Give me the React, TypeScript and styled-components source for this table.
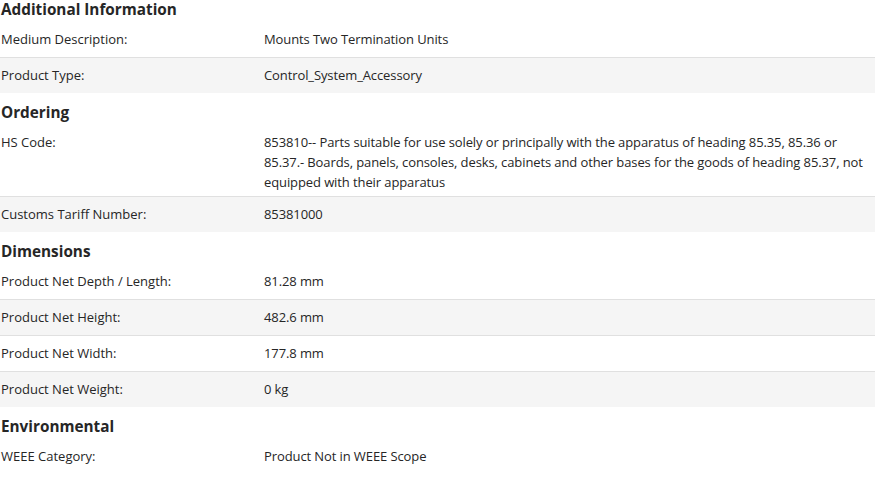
import React from "react";
import styled, { createGlobalStyle } from "styled-components";

type Row = {
  label: string;
  value: string;
};

type Section = {
  title: string;
  rows: Row[];
};

const sections: Section[] = [
  {
    title: "Additional Information",
    rows: [
      { label: "Medium Description:", value: "Mounts Two Termination Units" },
      { label: "Product Type:", value: "Control_System_Accessory" },
    ],
  },
  {
    title: "Ordering",
    rows: [
      {
        label: "HS Code:",
        value:
          "853810-- Parts suitable for use solely or principally with the apparatus of heading 85.35, 85.36 or 85.37.- Boards, panels, consoles, desks, cabinets and other bases for the goods of heading 85.37, not equipped with their apparatus",
      },
      { label: "Customs Tariff Number:", value: "85381000" },
    ],
  },
  {
    title: "Dimensions",
    rows: [
      { label: "Product Net Depth / Length:", value: "81.28 mm" },
      { label: "Product Net Height:", value: "482.6 mm" },
      { label: "Product Net Width:", value: "177.8 mm" },
      { label: "Product Net Weight:", value: "0 kg" },
    ],
  },
  {
    title: "Environmental",
    rows: [{ label: "WEEE Category:", value: "Product Not in WEEE Scope" }],
  },
];

const App = () => {
  return (
    <>
      <GlobalStyle />
      <Page>
        {sections.map((section, i) => (
          <SectionBox key={section.title}>
            <Heading $first={i === 0}>{section.title}</Heading>
            {section.rows.map((row, j) => (
              <InfoRow key={row.label} $shaded={j % 2 === 1} $divider={j > 0}>
                <Label>{row.label}</Label>
                <Value>{row.value}</Value>
              </InfoRow>
            ))}
          </SectionBox>
        ))}
      </Page>
    </>
  );
};

export default App;

const GlobalStyle = createGlobalStyle`
  html, body {
    margin: 0;
    padding: 0;
    background: #ffffff;
  }
  *, *::before, *::after {
    box-sizing: border-box;
  }
  body {
    font-family: "Open Sans", "Liberation Sans", sans-serif;
    color: #1f1f1f;
    overflow: hidden;
  }
`;

const Page = styled.div`
  width: 875px;
  padding-top: 1px;
  display: flex;
  flex-direction: column;
`;

const SectionBox = styled.section`
  display: flex;
  flex-direction: column;
`;

const Heading = styled.h3<{ $first?: boolean }>`
  margin: 0;
  padding: ${(p) => (p.$first ? "0 0 3px 1px" : "11px 0 3px 1px")};
  font-size: 15.3px;
  line-height: 17px;
  font-weight: 700;
  color: #262626;
`;

const InfoRow = styled.div<{ $shaded?: boolean; $divider?: boolean }>`
  display: grid;
  grid-template-columns: 264px 1fr;
  min-height: 36px;
  padding: 7px 0 4px;
  background: ${(p) => (p.$shaded ? "#f5f5f5" : "#ffffff")};
  border-top: 1px solid ${(p) => (p.$divider ? "#e0e0e0" : "transparent")};
  font-size: 13px;
  line-height: 20px;
`;

const Label = styled.div`
  padding-left: 1px;
  color: #262626;
`;

const Value = styled.div`
  letter-spacing: -0.1px;
  color: #262626;
`;
